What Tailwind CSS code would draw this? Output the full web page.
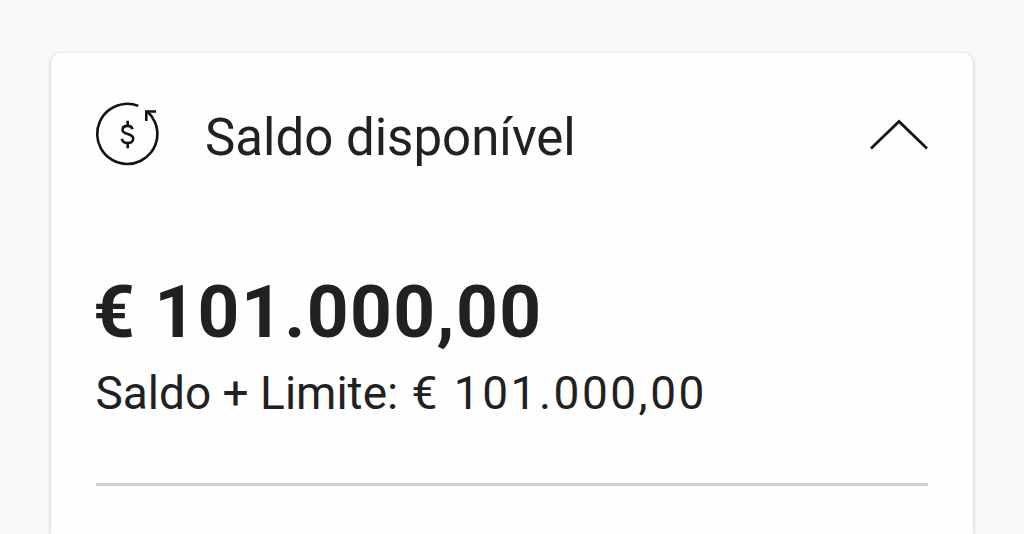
<!DOCTYPE html>
<html lang="pt">
<head>
  <meta charset="UTF-8">
  <meta name="viewport" content="width=device-width, initial-scale=1.0">
  <title>Saldo disponível</title>
  <script src="https://cdn.jsdelivr.net/npm/@tailwindcss/browser@4"></script>
</head>
<body class="h-screen overflow-hidden bg-[#f9f9f9] font-['Roboto',sans-serif] text-[#212121]">
  <main class="h-full px-[51px] pt-[53px]">
    <section class="h-full rounded-t-[10px] bg-[#fefefe] px-[45px] pt-[47px] shadow-[0_1px_4px_rgba(0,0,0,0.22)]">

      <header class="flex h-[70px] items-center">
        <svg class="size-[70px] -ml-[3px] shrink-0" viewBox="0 0 70 70" fill="none" stroke="#111" stroke-width="2.6">
          <path d="M45.3 5.9A30.1 30.1 0 1 0 53.8 11" />
          <path d="M53.3 21V11.5H63" />
          <path d="M39.5 29.2C38.9 27 37.1 25.9 34.7 25.9C31.7 25.9 29.5 27.4 29.5 29.8C29.5 35.6 40.2 32.4 40.2 38.6C40.2 41.4 37.8 43.1 34.8 43.1C31.6 43.1 29.3 41.5 28.8 38.8M34.7 20.7V26M34.7 43V48.3" />
        </svg>
        <h1 class="ml-[42px] pt-[6px] text-[51px] leading-[60px] whitespace-nowrap">Saldo disponível</h1>
        <svg class="ml-auto h-[32px] w-[58px] shrink-0" viewBox="0 0 58 32" fill="none" stroke="#111" stroke-width="2.7">
          <path d="M1 29.5L29 2.5L57 29.5" />
        </svg>
      </header>

      <p class="mt-[98px] -ml-[3px] text-[73px] leading-[88px] font-bold tracking-[1.4px] [word-spacing:-1.5px] whitespace-nowrap">€ 101.000,00</p>
      <p class="mt-[7px] -ml-[0.5px] text-[46px] leading-[60px] whitespace-nowrap">Saldo + Limite: <span class="ml-[2px] tracking-[2.5px]">€ 101.000,00</span></p>

      <hr class="mt-[60px] border-0 h-[3px] bg-[#cecece]">
    </section>
  </main>
</body>
</html>
